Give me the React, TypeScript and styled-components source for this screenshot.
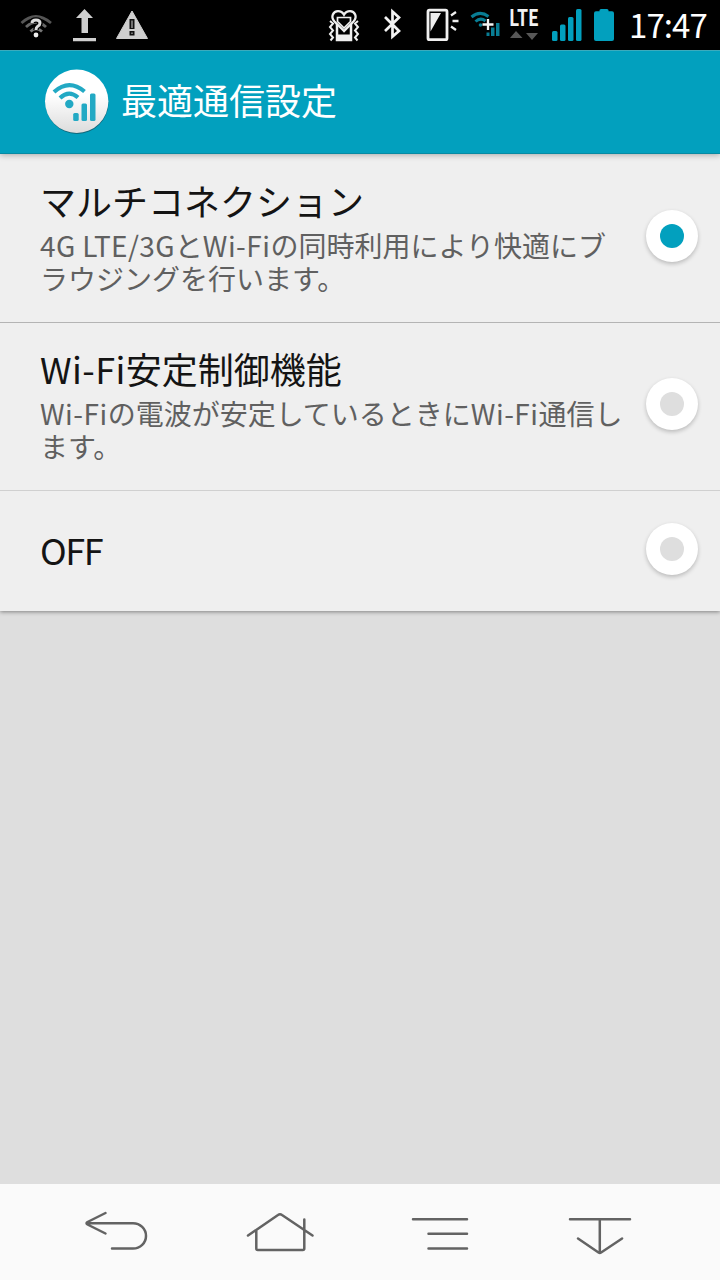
import React from "react";
import styled, { createGlobalStyle } from "styled-components";

const TEAL = "#02a0be";

const GlobalStyle = createGlobalStyle`
  * { box-sizing: border-box; }
  body {
    margin: 0;
    background: #dedede;
    font-family: "Noto Sans CJK JP", "Noto Sans", sans-serif;
  }
`;

const Screen = styled.div`
  width: 720px;
  height: 1280px;
  display: flex;
  flex-direction: column;
  overflow: hidden;
  background: #dedede;
`;

const StatusBar = styled.div`
  height: 50px;
  flex: none;
  display: flex;
  justify-content: space-between;
  background: #000;
  color: #fff;
`;

const StatusGroup = styled.div`
  display: flex;
  height: 50px;
`;

const StatusIcon = styled.svg`
  display: block;
  flex: none;
`;

const Network = styled.div`
  width: 40px;
  display: flex;
  flex-direction: column;
  align-items: flex-start;
  padding: 5px 0 0 2px;
`;

const NetworkLabel = styled.span`
  height: 23px;
  font: 700 22px/22px "Noto Sans CJK JP", sans-serif;
  color: #f2f2f2;
  transform: scaleX(0.81);
  transform-origin: left;
`;

const Clock = styled.div`
  width: 92px;
  padding-left: 1px;
  font-size: 33px;
  line-height: 48px;
  letter-spacing: -0.9px;
  white-space: nowrap;
`;

const Header = styled.header`
  position: relative;
  z-index: 1;
  height: 104px;
  flex: none;
  display: flex;
  align-items: flex-start;
  padding: 15px 0 0 41px;
  background: ${TEAL};
  border-top: 1px solid #3cabbd;
  border-bottom: 1px solid #078aa3;
  box-shadow: 0 1px 6px rgba(0, 0, 0, 0.3);
`;

const HeaderTitle = styled.h1`
  margin: 7px 0 0 8px;
  font-size: 36px;
  line-height: 52px;
  font-weight: 400;
  color: #fff;
`;

const List = styled.main`
  flex: none;
  background: #efefef;
  box-shadow: 0 1px 4px rgba(0, 0, 0, 0.42);
`;

const Row = styled.section<{ $height: number; $line?: string }>`
  height: ${(p) => p.$height}px;
  display: flex;
  align-items: center;
  justify-content: space-between;
  padding: 0 22px 4px 40px;
  border-bottom: ${(p) => (p.$line ? `1px solid ${p.$line}` : "none")};
`;

const RowTitle = styled.h2`
  margin: 0;
  font-size: 36px;
  line-height: 44px;
  font-weight: 400;
  color: #141414;
  white-space: nowrap;
`;

const Summary = styled.p`
  margin: 7px 0 0;
  font-size: 28px;
  line-height: 33px;
  color: #606060;
  white-space: nowrap;
`;

const Latin = styled.span<{ $tracking: number }>`
  letter-spacing: ${(p) => p.$tracking}px;
`;

const Radio = styled.span<{ $checked?: boolean }>`
  width: 52px;
  height: 52px;
  flex: none;
  display: grid;
  place-items: center;
  margin-bottom: 1px;
  border-radius: 50%;
  background: #fff;
  box-shadow: 0 2px 4px rgba(0, 0, 0, 0.22);

  &::after {
    content: "";
    width: 24px;
    height: 24px;
    border-radius: 50%;
    background: ${(p) => (p.$checked ? TEAL : "#dedede")};
  }
`;

const NavBar = styled.nav`
  height: 96px;
  flex: none;
  margin-top: auto;
  display: flex;
  padding: 0 37px;
  background: #fafafa;
`;

const NavIcon = styled.svg`
  width: 161.5px;
  height: 96px;
  flex: none;
  fill: none;
  stroke: #636363;
  stroke-width: 2.5;
  stroke-linecap: round;
  stroke-linejoin: round;
`;

const WifiUnknown = () => (
  <StatusIcon width="60" height="50" viewBox="0 0 60 50" fill="none">
    <path d="M21.500 23q14-13 29.500 0" stroke="#555" strokeWidth="2.800" />
    <path d="M26 27q10-9.500 20 0" stroke="#686868" strokeWidth="2.800" />
    <path d="M30.500 31.500q5.500-5.500 11.500 0" stroke="#777" strokeWidth="2.800" />
    <path d="M32 23q0-3 4-3t4 3q0 2-2.500 3.500Q36 27.500 36 30" stroke="#000" strokeWidth="5.500" />
    <path d="M32 23q0-3 4-3t4 3q0 2-2.500 3.500Q36 27.500 36 30" stroke="#dcdcdc" strokeWidth="3" />
    <circle cx="36" cy="35" r="2.400" fill="#eee" />
  </StatusIcon>
);

const Upload = () => (
  <StatusIcon width="48" height="50" viewBox="60 0 48 50" fill="#cfcfcf">
    <path d="M84.500 9l8.500 9h-5v15h-6.500V18h-5.500zM73 38h23v3.200H73z" />
  </StatusIcon>
);

const Warning = () => (
  <StatusIcon width="48" height="50" viewBox="108 0 48 50">
    <path d="M132 11l15.500 27.500h-31z" fill="#cfcfcf" stroke="#cfcfcf" strokeWidth="1" strokeLinejoin="round" />
    <path d="M129.500 19h5v10h-5zM129.500 31h5v4.500h-5z" fill="#111" />
    <path d="M131.300 20.500h1.400V28h-1.400zM131.300 32.500h1.400v1.500h-1.400z" fill="#999" />
  </StatusIcon>
);

const Vibrate = () => (
  <StatusIcon width="48" height="50" viewBox="320 0 48 50" fill="none" stroke="#efefef">
    <path d="M337 23v17h14V23" strokeWidth="2.500" />
    <path d="M336 34.500h16v6.500h-16z" fill="#efefef" stroke="none" />
    <path d="M344 31l-9.500-9.500c-4.500-5-1-10.300 3.500-10.300q4 0 6 3.500q2-3.500 6-3.500c4.500 0 8 5.300 3.500 10.300z" strokeWidth="2.300" fill="#000" />
    <path d="M337.500 17.500h13v4L344 28l-6.500-6.500z" strokeWidth="1.700" />
    <path d="M330 21l3 2.500-3 3.500 3 3.500-3 3.500 3 3.500-2.500 3M358 21l-3 2.500 3 3.500-3 3.500 3 3.500-3 3.500 2.500 3" strokeWidth="2" />
  </StatusIcon>
);

const Bluetooth = () => (
  <StatusIcon width="48" height="50" viewBox="368 0 48 50" fill="none" stroke="#f2f2f2" strokeWidth="2.700">
    <path d="M385 17l14 14-6.500 5.500v-25l6.500 6-14 13.500" />
  </StatusIcon>
);

const ScreenLight = () => (
  <StatusIcon width="48" height="50" viewBox="416 0 48 50">
    <rect x="428" y="10.200" width="19" height="29.500" rx="1.500" fill="#000" stroke="#f0f0f0" strokeWidth="2.800" />
    <path d="M430.500 13h10.500l-10.500 18.500z" fill="#efefef" />
    <path d="M451 15.500l5-3.500M452.500 21h6M451 26.500l5 3.500" stroke="#efefef" strokeWidth="2.300" />
  </StatusIcon>
);

const WifiPlus = () => (
  <StatusIcon width="43" height="50" viewBox="464 0 43 50" fill="none">
    <path d="M471.500 17q8.500-7 17-.5M475.500 21.500q5-4.500 10-.5" stroke="#087d94" strokeWidth="3" />
    <circle cx="480.500" cy="25" r="1.800" fill="#087d94" />
    <path d="M486.500 32.500h3v3.500h-3zM491 27.500h3.500V36H491zM496 23h3.500v13H496z" fill="#087d94" />
    <path d="M488 19v11M482.500 24.500h11" stroke="#f5f5f5" strokeWidth="2.300" />
  </StatusIcon>
);

const Signal = () => (
  <StatusIcon width="42" height="50" viewBox="547 0 42 50" fill={TEAL}>
    <rect x="552" y="31" width="5.500" height="10" rx="1.500" />
    <rect x="560" y="24.500" width="5.500" height="16.500" rx="1.500" />
    <rect x="568" y="17" width="5.500" height="24" rx="1.500" />
    <rect x="576" y="9" width="5.500" height="32" rx="1.500" />
  </StatusIcon>
);

const Battery = () => (
  <StatusIcon width="39" height="50" viewBox="589 0 39 50" fill={TEAL}>
    <rect x="594" y="11.300" width="20" height="29.700" rx="2" />
    <rect x="599.500" y="9" width="9" height="5" rx="1.500" />
  </StatusIcon>
);

const AppIcon = () => (
  <svg width="72" height="72" viewBox="41 66 72 72" fill="none">
    <defs>
      <linearGradient id="disc" x1="0" y1="0" x2="0" y2="1">
        <stop offset="0.4" stopColor="#fff" />
        <stop offset="1" stopColor="#dcdcdc" />
      </linearGradient>
    </defs>
    <circle cx="77" cy="102.500" r="31.500" fill="#11677a" />
    <circle cx="76.700" cy="101.300" r="31.700" fill="url(#disc)" />
    <path d="M54 92q15-13.500 30.500-.5M60 98q9-8.500 18-.5" stroke="#22a9c4" strokeWidth="4.200" />
    <circle cx="69.300" cy="104" r="4.200" fill="#22a9c4" />
    <rect x="73.200" y="113" width="5.500" height="8" rx="1.500" fill="#22a9c4" />
    <rect x="81.500" y="103.500" width="5.500" height="17.500" rx="1.500" fill="#22a9c4" />
    <rect x="90" y="93.500" width="5.500" height="27.500" rx="1.500" fill="#22a9c4" />
  </svg>
);

export default function App() {
  return (
    <Screen>
      <GlobalStyle />
      <StatusBar>
        <StatusGroup>
          <WifiUnknown />
          <Upload />
          <Warning />
        </StatusGroup>
        <StatusGroup>
          <Vibrate />
          <Bluetooth />
          <ScreenLight />
          <WifiPlus />
          <Network>
            <NetworkLabel>LTE</NetworkLabel>
            <svg width="30" height="12" viewBox="509 28 30 12" fill="#575757">
              <path d="M510 38l6-7 6.500 7zM526 33h12l-6 7z" />
            </svg>
          </Network>
          <Signal />
          <Battery />
          <Clock>17:47</Clock>
        </StatusGroup>
      </StatusBar>
      <Header>
        <AppIcon />
        <HeaderTitle>最適通信設定</HeaderTitle>
      </Header>
      <List>
        <Row $height={169} $line="#b4b4b4">
          <div>
            <RowTitle>マルチコネクション</RowTitle>
            <Summary>
              <Latin $tracking={0.35}>4G LTE/3G</Latin>と<Latin $tracking={0.5}>Wi-Fi</Latin>の同時利用により快適にブ
              <br />
              ラウジングを行います。
            </Summary>
          </div>
          <Radio $checked />
        </Row>
        <Row $height={168} $line="#d0d0d0">
          <div>
            <RowTitle>
              <Latin $tracking={0.4}>Wi-Fi</Latin>安定制御機能
            </RowTitle>
            <Summary>
              <Latin $tracking={0.5}>Wi-Fi</Latin>の電波が安定しているときに<Latin $tracking={0.5}>Wi-Fi</Latin>通信し
              <br />
              ます。
            </Summary>
          </div>
          <Radio />
        </Row>
        <Row $height={120}>
          <RowTitle>
            <Latin $tracking={-1.4}>OFF</Latin>
          </RowTitle>
          <Radio />
        </Row>
      </List>
      <NavBar>
        <NavIcon viewBox="37 1184 161.5 96">
          <path d="M105.500 1213l-18 9q-2 1.300 0 2.500l18 9M87 1223.200h46a13 12.700 0 0 1 0 25.400h-21" />
        </NavIcon>
        <NavIcon viewBox="198.5 1184 161.5 96">
          <path d="M247.500 1235.500l30-20.500q2-1.500 4 0l30.500 20.500M255.800 1230v18.500q0 1.500 1.500 1.500h45q1.500 0 1.500-1.500v-29" />
        </NavIcon>
        <NavIcon viewBox="360 1184 161.5 96">
          <path d="M413 1219.300h54M428.500 1233.800h38.500M428.500 1248.600h38.500" />
        </NavIcon>
        <NavIcon viewBox="521.5 1184 161.5 96">
          <path d="M569.500 1219.300h60M599.300 1219.300v33.500M577.500 1238.500l20.500 14q1.300.8 2.600 0l21-14" />
        </NavIcon>
      </NavBar>
    </Screen>
  );
}
